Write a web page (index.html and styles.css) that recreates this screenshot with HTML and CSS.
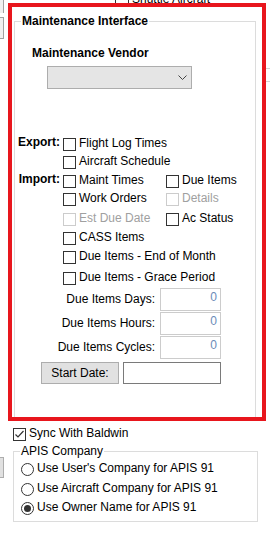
FILE: index.html
```html
<!DOCTYPE html>
<html lang="en">

<head>
    <meta charset="UTF-8">
    <meta name="viewport" content="width=device-width, initial-scale=1.0">
    <title>Maintenance Interface</title>
    <link rel="stylesheet" href="styles.css">
</head>

<body>
    <div class="page">
        <div class="gutter">
            <div class="stub stub-a"></div>
            <div class="stub stub-b"></div>
            <div class="stub stub-c"></div>
        </div>

        <div class="content">
            <div class="peek">
                <span class="peek-line"></span>
                <span class="peek-box"></span>
                <span class="peek-text">Shuttle Aircraft</span>
            </div>

            <div class="highlight">
                <fieldset class="group maint">
                    <legend>Maintenance Interface</legend>

                    <div class="vendor-label">Maintenance Vendor</div>
                    <div class="select">
                        <svg width="9" height="5" viewBox="0 0 9 5">
                            <polyline points="0.5,0.5 4.5,4.5 8.5,0.5" fill="none" stroke="#444" stroke-width="1" />
                        </svg>
                    </div>

                    <div class="options">
                        <span class="hd hd-export">Export:</span>
                        <label class="opt"><span class="box"></span><span class="txt">Flight Log Times</span></label>
                        <label class="opt"><span class="box"></span><span class="txt">Aircraft Schedule</span></label>

                        <span class="hd hd-import">Import:</span>
                        <label class="opt"><span class="box"></span><span class="txt">Maint Times</span></label>
                        <label class="opt col3"><span class="box"></span><span class="txt">Due Items</span></label>
                        <label class="opt"><span class="box"></span><span class="txt">Work Orders</span></label>
                        <label class="opt col3 off"><span class="box"></span><span class="txt">Details</span></label>
                        <label class="opt off"><span class="box"></span><span class="txt">Est Due Date</span></label>
                        <label class="opt col3"><span class="box"></span><span class="txt">Ac Status</span></label>
                        <label class="opt"><span class="box"></span><span class="txt">CASS Items</span></label>
                        <label class="opt wide"><span class="box"></span><span class="txt">Due Items - End of Month</span></label>
                        <label class="opt wide"><span class="box"></span><span class="txt">Due Items - Grace Period</span></label>
                    </div>

                    <div class="fields">
                        <span class="field-label">Due Items Days:</span>
                        <span class="num">0</span>
                        <span class="field-label">Due Items Hours:</span>
                        <span class="num">0</span>
                        <span class="field-label">Due Items Cycles:</span>
                        <span class="num">0</span>
                    </div>

                    <div class="start-row">
                        <button class="btn">Start Date:</button>
                        <span class="date"></span>
                    </div>
                </fieldset>
            </div>

            <label class="opt sync">
                <span class="box">
                    <svg width="11" height="11" viewBox="0 0 11 11">
                        <polyline points="1.5,5.5 4,8 9.5,2" fill="none" stroke="#333" stroke-width="1.2" />
                    </svg>
                </span>
                <span class="txt">Sync With Baldwin</span>
            </label>

            <fieldset class="group apis">
                <legend>APIS Company</legend>
                <div class="radios">
                    <label class="radio"><span class="dot"></span><span class="txt">Use User's Company for APIS 91</span></label>
                    <label class="radio"><span class="dot"></span><span class="txt">Use Aircraft Company for APIS 91</span></label>
                    <label class="radio on"><span class="dot"></span><span class="txt">Use Owner Name for APIS 91</span></label>
                </div>
            </fieldset>
        </div>

        <div class="edge">
            <span class="edge-line first"></span>
            <span class="edge-line"></span>
        </div>
    </div>
</body>

</html>
```

FILE: styles.css
```css
* {
    margin: 0;
    padding: 0;
    box-sizing: border-box;
}

body {
    font-family: "Liberation Sans", Arial, sans-serif;
    font-size: 12px;
    color: #000;
    background: #fff;
}

.page {
    display: flex;
    width: 270px;
    height: 540px;
    overflow: hidden;
}

/* bits of neighbouring controls cut off at the edges */
.gutter {
    width: 8px;
    display: flex;
    flex-direction: column;
    align-items: flex-start;
}

.stub {
    width: 4px;
    background-color: #f0f0f0;
    border-right: 1px solid #a0a0a0;
}

.stub-a,
.stub-b {
    background-image: radial-gradient(#555 0.45px, transparent 0.7px);
    background-size: 2px 2px;
}

.stub-a {
    height: 13px;
}

.stub-b {
    height: 22px;
    margin-top: 4px;
    border-top: 1px solid #a0a0a0;
    border-bottom: 1px solid #a0a0a0;
}

.stub-c {
    height: 21px;
    margin-top: 418px;
    background: #e1e1e1;
    border: 1px solid #adadad;
    border-left: none;
}

.edge {
    width: 4px;
    display: flex;
    flex-direction: column;
}

.edge-line {
    height: 1px;
    margin-top: 12px;
    background: #d4d4d4;
}

.edge-line.first {
    margin-top: 68px;
}

.content {
    width: 258px;
    display: flex;
    flex-direction: column;
    align-items: flex-start;
}

.peek {
    height: 3px;
    width: 100%;
    display: flex;
    align-items: flex-end;
    overflow: hidden;
}

.peek-line {
    width: 1px;
    height: 3px;
    margin-left: 107px;
    background: #333;
}

.peek-box {
    width: 1px;
    height: 3px;
    margin-left: 12px;
    background: #333;
}

.peek-text {
    margin-left: 3px;
    line-height: 7px;
    white-space: nowrap;
}

/* red annotation frame */
.highlight {
    width: 258px;
    height: 418px;
    border: 4px solid #e8161d;
    padding-left: 2px;
    display: flex;
    flex-direction: column;
}

.group {
    border: 1px solid #dcdcdc;
    min-width: 0;
}

.group legend {
    margin-left: 6px;
    padding: 0 1px;
    line-height: 14px;
}

.maint {
    width: 242px;
    margin-top: 7px;
    flex: 1;
    border-bottom: none;
}

.maint legend {
    font-weight: bold;
}

.vendor-label {
    margin: 18px 0 0 17px;
    font-weight: bold;
    line-height: 14px;
}

.select {
    width: 145px;
    height: 23px;
    margin: 6px 0 0 32px;
    background: #e5e5e5;
    border: 1px solid #adadad;
    display: flex;
    align-items: center;
    justify-content: flex-end;
    padding-right: 4px;
}

.options {
    margin-top: 46px;
    display: grid;
    grid-template-columns: 48px 103px 1fr;
    grid-template-rows: 18px 19px 18px 20px 19px 19px 21px 19px;
}

.hd {
    grid-column: 1;
    font-weight: bold;
    text-align: right;
    padding: 3px 3px 0 0;
    line-height: 9px;
}

.opt {
    grid-column: 2;
    display: flex;
    align-items: flex-start;
    padding-top: 3px;
    white-space: nowrap;
}

.opt.col3 {
    grid-column: 3;
}

.opt.wide {
    grid-column: 2 / 4;
}

.box {
    width: 13px;
    height: 13px;
    flex: none;
    border: 1px solid #333;
    background: #fff;
    margin-right: 3px;
    display: flex;
}

.txt {
    line-height: 11px;
    white-space: nowrap;
}

.off .box {
    border-color: #cccccc;
}

.off .txt {
    color: #a0a0a0;
}

.fields {
    display: grid;
    grid-template-columns: 140px 61px;
    grid-auto-rows: 23px;
    column-gap: 5px;
    row-gap: 1px;
}

.field-label {
    align-self: center;
    text-align: right;
    line-height: 13px;
}

.num {
    border: 1px solid #cccccc;
    text-align: right;
    padding: 2px 3px 0 0;
    line-height: 13px;
    color: #6a8bb8;
}

.start-row {
    display: flex;
    gap: 4px;
    margin: 3px 0 0 26px;
}

.btn {
    width: 78px;
    height: 22px;
    font: inherit;
    color: #000;
    background: #e1e1e1;
    border: 1px solid #adadad;
}

.date {
    width: 98px;
    height: 22px;
    border: 1px solid #7a7a7a;
}

.sync {
    margin: 7px 0 0 5px;
    padding-top: 0;
}

.apis {
    width: 245px;
    margin: 3px 0 0 5px;
}

.radios {
    padding: 5px 0 6px 7px;
    display: flex;
    flex-direction: column;
    gap: 6px;
}

.radio {
    display: flex;
    align-items: flex-start;
}

.radio+.radio {
    margin-top: 1px;
}

.radio:last-child {
    margin-top: 0;
}

.dot {
    width: 13px;
    height: 13px;
    flex: none;
    border: 1px solid #333;
    border-radius: 50%;
    margin-right: 3px;
    display: flex;
    align-items: center;
    justify-content: center;
}

.radio.on .dot::after {
    content: "";
    width: 7px;
    height: 7px;
    border-radius: 50%;
    background: #333;
}
```
